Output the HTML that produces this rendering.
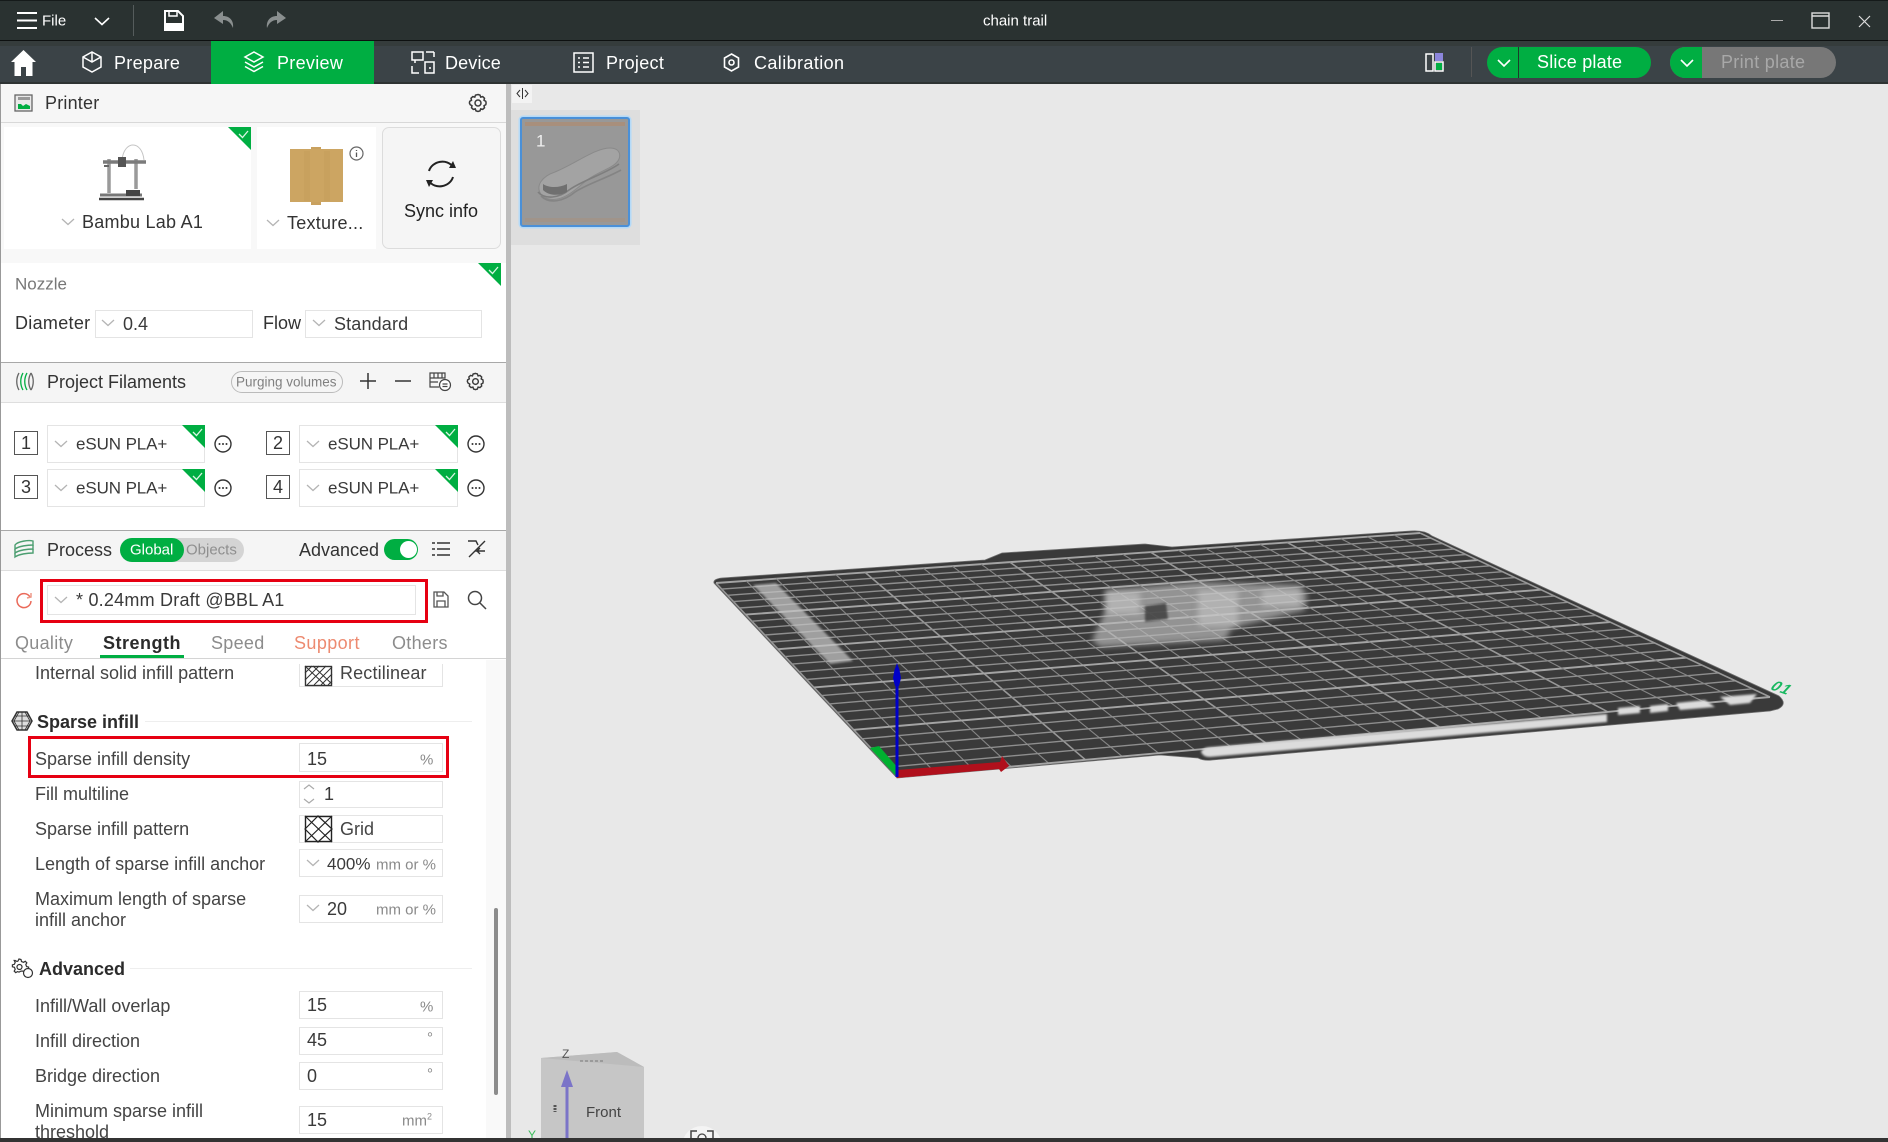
<!DOCTYPE html>
<html lang="en"><head><meta charset="utf-8"><title>chain trail</title>
<style>
html,body{margin:0;padding:0}
body{width:1888px;height:1142px;position:relative;overflow:hidden;background:#e8e8e8;font-family:"Liberation Sans","DejaVu Sans",sans-serif;font-size:18px;color:#3a3a3a}
.a{position:absolute}
.t{position:absolute;white-space:nowrap;line-height:1;transform:translateY(-50%)}
.w{color:#fff}
.b{font-weight:700;color:#2b2b2b}
.g{color:#8c8c8c;letter-spacing:.3px}
.s{font-size:15px;color:#8a8a8a}
.f{font-size:17px;letter-spacing:-.1px}
.box{position:absolute;background:#fff;border:1px solid #e4e4e4;box-sizing:border-box}
.num{position:absolute;width:24px;height:24px;border:1px solid #555;box-sizing:border-box;background:#fff;text-align:center;line-height:22px;font-size:18px;color:#333}
svg{position:absolute;overflow:visible}
</style></head><body>
<svg width="0" height="0" style="position:absolute"><defs>
<symbol id="chev" viewBox="0 0 14 8"><path d="M1 1l6 5.500L13 1" fill="none" stroke="#b4b4b4" stroke-width="1.300"/></symbol>
<symbol id="tri" viewBox="0 0 23 23"><path d="M0 0H23V23Z" fill="#00ae42"/><path d="M11 7l3.500 3.500L20 4" fill="none" stroke="#d9f5e3" stroke-width="1.300"/></symbol>
<symbol id="more" viewBox="0 0 18 18"><circle cx="9" cy="9" r="8" fill="#fff" stroke="#333" stroke-width="1.400"/><circle cx="5.500" cy="9" r="1" fill="#333"/><circle cx="9" cy="9" r="1" fill="#333"/><circle cx="12.500" cy="9" r="1" fill="#333"/></symbol>
<symbol id="gear" viewBox="0 0 20 20"><path d="M10 1.500l2 .6.700 2 2-.5 1.800 1.700-.5 2 1.800 1 .3 1.700-.3 1.700-1.800 1 .5 2-1.800 1.700-2-.5-.7 2-2 .6-2-.6-.7-2-2 .5-1.800-1.700.5-2-1.800-1L1.400 10l.3-1.700 1.800-1-.5-2 1.800-1.700 2 .5.700-2z" fill="none" stroke="#3a3a3a" stroke-width="1.500"/><circle cx="10" cy="10" r="3" fill="none" stroke="#3a3a3a" stroke-width="1.500"/></symbol>
</defs></svg>

<!-- title bar -->
<div class="a" style="left:0;top:0;width:1888px;height:41px;background:#2a3231;border-top:1px solid #151a1a;border-bottom:1px solid #0d1010;box-sizing:border-box"></div>
<div class="a" style="left:0;top:41px;width:1888px;height:5px;background:#353c3c"></div>
<svg style="left:16px;top:11px" width="22" height="20"><path d="M1 2H21M1 9.500H21M1 17H21" stroke="#fff" stroke-width="2"/></svg>
<span class="t w" style="left:42px;top:21px;font-size:15px">File</span>
<svg style="left:94px;top:17px" width="16" height="9"><path d="M1 1l7 6.500L15 1" fill="none" stroke="#fff" stroke-width="1.600"/></svg>
<div class="a" style="left:133px;top:5px;width:1px;height:31px;background:#555c5c"></div>
<svg style="left:164px;top:10px" width="20" height="21"><path d="M1 1H14L19 6V20H1Z" fill="none" stroke="#fff" stroke-width="2"/><path d="M5 1V6H13V1" fill="none" stroke="#fff" stroke-width="1.500"/><path d="M2 13H18V19H2Z" fill="#fff"/></svg>
<svg style="left:214px;top:11px" width="21" height="18"><path d="M9 0L0 7l9 6V9c5 0 8 3 10 8 1-7-3-12-10-12z" fill="#8a8f8f"/></svg>
<svg style="left:265px;top:11px" width="21" height="18"><path d="M12 0l9 7-9 6V9C7 9 4 12 2 17 1 10 5 5 12 5z" fill="#8a8f8f"/></svg>
<span class="t w" style="left:983px;top:21px;font-size:15px">chain trail</span>
<div class="a" style="left:1771px;top:20px;width:12px;height:1px;background:#aaa"></div>
<svg style="left:1811px;top:11px" width="19" height="18"><rect x="1" y="2" width="17" height="15" fill="none" stroke="#ddd" stroke-width="1.400"/><path d="M1 5H18" stroke="#ddd" stroke-width="1.400"/></svg>
<svg style="left:1858px;top:15px" width="13" height="13"><path d="M1 1L12 12M12 1L1 12" stroke="#ddd" stroke-width="1.200"/></svg>

<!-- tab bar -->
<div class="a" style="left:0;top:46px;width:1888px;height:38px;background:#3b4347;border-bottom:2px solid #2e3333;box-sizing:border-box"></div>
<div class="a" style="left:211px;top:41px;width:163px;height:43px;background:#00ae42"></div>
<svg style="left:11px;top:50px" width="25" height="26"><path d="M12.500 0L25 12h-3.500v14H15v-9h-5v9H3.500V12H0z" fill="#fff"/></svg>
<svg style="left:81px;top:50px" width="22" height="24" fill="none" stroke="#fff" stroke-width="1.500"><path d="M11 2l9 5v10l-9 5-9-5V7z"/><path d="M2 7l9 5 9-5M11 12V2"/></svg>
<span class="t w" style="left:114px;top:63px;letter-spacing:.3px">Prepare</span>
<svg style="left:243px;top:50px" width="22" height="24" fill="none" stroke="#fff" stroke-width="1.500"><path d="M11 2l9 5-9 5-9-5z"/><path d="M2 12l9 5 9-5M2 16.500l9 5 9-5"/></svg>
<span class="t w" style="left:277px;top:63px;letter-spacing:.3px">Preview</span>
<svg style="left:411px;top:51px" width="24" height="23" fill="none" stroke="#fff" stroke-width="1.500"><path d="M1 1H12V9H1zM4 12v-3M15 1h8M23 1v5M1 15v7h7M14 11h9v11H14zM18 17h2"/></svg>
<span class="t w" style="left:445px;top:63px;letter-spacing:.15px">Device</span>
<svg style="left:573px;top:52px" width="21" height="21" fill="none" stroke="#fff" stroke-width="1.500"><path d="M1 1H20V20H1zM5 6H7M5 10.500H7M5 15H7M10 6H16M10 10.500H16M10 15H16"/></svg>
<span class="t w" style="left:606px;top:63px;letter-spacing:.3px">Project</span>
<svg style="left:723px;top:53px" width="17" height="19" fill="none" stroke="#fff" stroke-width="1.600"><path d="M8.500 1l7 4v9l-7 4-7-4V5z"/><circle cx="8.500" cy="9.500" r="2.500"/></svg>
<span class="t w" style="left:754px;top:63px;letter-spacing:.4px">Calibration</span>
<svg style="left:1425px;top:52px" width="20" height="20"><rect x="1" y="2" width="7" height="17" fill="none" stroke="#fff" stroke-width="1.500"/><rect x="10" y="1" width="8" height="8" fill="#8c86dc"/><rect x="10" y="10" width="8" height="9" fill="none" stroke="#fff" stroke-width="1.500"/><rect x="11" y="11" width="6" height="7" fill="#00ae42"/></svg>
<div class="a" style="left:1471px;top:47px;width:1px;height:30px;background:#555"></div>
<div class="a" style="left:1487px;top:47px;width:164px;height:31px;border-radius:16px;background:#00ae42"></div>
<div class="a" style="left:1518px;top:47px;width:1px;height:31px;background:#1c3b2a"></div>
<svg style="left:1497px;top:59px" width="14" height="9"><path d="M1 1l6 6 6-6" fill="none" stroke="#fff" stroke-width="1.600"/></svg>
<span class="t w" style="left:1537px;top:62px;letter-spacing:.2px">Slice plate</span>
<div class="a" style="left:1670px;top:47px;width:166px;height:31px;border-radius:16px;background:#777;overflow:hidden"><div style="width:32px;height:31px;background:#00ae42"></div></div>
<svg style="left:1680px;top:59px" width="14" height="9"><path d="M1 1l6 6 6-6" fill="none" stroke="#fff" stroke-width="1.600"/></svg>
<span class="t" style="left:1721px;top:62px;color:#a8a8a8;letter-spacing:.3px">Print plate</span>

<!-- side panel -->
<div class="a" style="left:0;top:84px;width:506px;height:1056px;background:#fff;border-left:1px solid #999;box-sizing:border-box"></div>
<div class="a" style="left:506px;top:84px;width:5px;height:1056px;background:#bdbdbd"></div>
<!-- printer -->
<div class="a" style="left:1px;top:84px;width:505px;height:38px;background:#f6f6f6;border-bottom:1px solid #d8d8d8;box-sizing:content-box"></div>
<div class="a" style="left:1px;top:123px;width:505px;height:140px;background:#f8f8f8"></div>
<svg style="left:13px;top:94px" width="20" height="18"><rect x="2" y="1" width="17" height="16" fill="#e9e9e9" stroke="#666" stroke-width="1.300"/><path d="M5 3H17V6H5z" fill="#999"/><path d="M5 15V10h3l2 2 3-2 4 2v3z" fill="#00ae42"/></svg>
<span class="t" style="left:45px;top:103px;color:#333;letter-spacing:.2px">Printer</span>
<svg style="left:468px;top:93px" width="20" height="20"><use href="#gear"/></svg>
<div class="a" style="left:4px;top:127px;width:247px;height:122px;background:#fff"></div>
<svg style="left:228px;top:127px" width="23" height="23"><use href="#tri"/></svg>
<svg style="left:98px;top:143px" width="50" height="58" fill="none"><path d="M24 17C26 -3 44 -3 46 17" stroke="#c4c4c4" stroke-width="1"/><path d="M11 16V50M38 16V46" stroke="#9a9a9a" stroke-width="3.500"/><path d="M5 19H48" stroke="#7b7b7b" stroke-width="3.500"/><rect x="20" y="14" width="8" height="10" fill="#555"/><path d="M6 23H11" stroke="#666" stroke-width="2"/><path d="M2 52H44" stroke="#777" stroke-width="3"/><path d="M1 56H46" stroke="#444" stroke-width="2.500"/><rect x="28" y="47" width="14" height="6" fill="#444"/></svg>
<svg style="left:61px;top:218px" width="14" height="8"><use href="#chev"/></svg>
<span class="t" style="left:82px;top:222px;letter-spacing:.25px;color:#333">Bambu Lab A1</span>
<div class="a" style="left:257px;top:127px;width:119px;height:122px;background:#fff"></div>
<svg style="left:289px;top:146px" width="55" height="60"><path d="M1 3H22V1H32V3H54V56H32V59H22V56H1z" fill="#c9a15f"/><path d="M1 3H54V56H1z" fill="#d0ab6a" opacity=".35"/><path d="M18 5V55M38 5V55" stroke="#c29855" stroke-width="6" opacity=".3"/></svg>
<svg style="left:349px;top:146px" width="15" height="15"><circle cx="7.500" cy="7.500" r="6.500" fill="#fff" stroke="#666" stroke-width="1.200"/><path d="M7.500 4V5M7.500 6.500V11" stroke="#555" stroke-width="1.300"/></svg>
<svg style="left:266px;top:219px" width="14" height="8"><use href="#chev"/></svg>
<span class="t" style="left:287px;top:223px;letter-spacing:.25px;color:#333">Texture...</span>
<div class="a" style="left:382px;top:127px;width:119px;height:122px;background:#f5f5f5;border:1px solid #dcdcdc;border-radius:7px;box-sizing:border-box"></div>
<svg style="left:423px;top:158px" width="36" height="32" fill="none" stroke="#222" stroke-width="2"><path d="M6 13C9 3 24 0 30 9"/><path d="M30 19C27 29 12 32 6 23"/><path d="M26 10l7 0-3-7z" fill="#222" stroke="none"/><path d="M10 22l-7 0 3 7z" fill="#222" stroke="none"/></svg>
<span class="t" style="left:404px;top:211px;color:#222">Sync info</span>
<!-- nozzle -->
<div class="a" style="left:4px;top:263px;width:497px;height:92px;background:#fff"></div>
<svg style="left:478px;top:263px" width="23" height="23"><use href="#tri"/></svg>
<span class="t" style="left:15px;top:284px;font-size:17px;color:#777">Nozzle</span>
<span class="t" style="left:15px;top:323px;color:#333;letter-spacing:.3px">Diameter</span>
<div class="box" style="left:95px;top:310px;width:158px;height:28px"></div>
<svg style="left:101px;top:319px" width="14" height="8"><use href="#chev"/></svg>
<span class="t" style="left:123px;top:324px">0.4</span>
<span class="t" style="left:263px;top:323px;color:#333">Flow</span>
<div class="box" style="left:305px;top:310px;width:177px;height:28px"></div>
<svg style="left:312px;top:319px" width="14" height="8"><use href="#chev"/></svg>
<span class="t" style="left:334px;top:324px;letter-spacing:.15px">Standard</span>
<!-- filaments -->
<div class="a" style="left:1px;top:362px;width:505px;height:1px;background:#a8a8a8"></div>
<div class="a" style="left:1px;top:363px;width:505px;height:39px;background:#f5f5f5;border-bottom:1px solid #dedede"></div>
<svg style="left:15px;top:372px" width="20" height="19" fill="none" stroke-width="1.300"><path d="M4 1C1 6 1 13 4 18" stroke="#666"/><path d="M8 1C5 6 5 13 8 18" stroke="#00ae42"/><path d="M12 1C9 6 9 13 12 18" stroke="#00ae42"/><path d="M16 1C19 6 19 13 16 18M16 1C13 6 13 13 16 18" stroke="#666"/></svg>
<span class="t" style="left:47px;top:382px;color:#333">Project Filaments</span>
<div class="a" style="left:231px;top:371px;width:112px;height:22px;border:1px solid #bbb;border-radius:11px;box-sizing:border-box;background:#f5f5f5"></div>
<span class="t" style="left:236px;top:382px;font-size:13.500px;color:#808080">Purging volumes</span>
<svg style="left:360px;top:373px" width="16" height="16"><path d="M8 0V16M0 8H16" stroke="#333" stroke-width="1.500"/></svg>
<svg style="left:395px;top:373px" width="16" height="16"><path d="M0 8H16" stroke="#333" stroke-width="1.500"/></svg>
<svg style="left:428px;top:372px" width="23" height="19" fill="none" stroke="#444" stroke-width="1.200"><path d="M2 1H17V6H2zM2 6V15H11M6 1V6M10 1V6M14 1V6M2 10H10"/><circle cx="17" cy="13" r="5.500" fill="#fff"/><path d="M14.500 12H19.500M14.500 14.500H19.500"/></svg>
<svg style="left:466px;top:372px" width="19" height="19"><use href="#gear"/></svg>

<div class="num" style="left:14px;top:431px">1</div>
<div class="box" style="left:47px;top:425px;width:158px;height:38px"></div>
<svg style="left:54px;top:440px" width="14" height="8"><use href="#chev"/></svg>
<span class="t f" style="left:76px;top:444px">eSUN PLA+</span>
<svg style="left:182px;top:425px" width="23" height="23"><use href="#tri"/></svg>
<svg style="left:214px;top:435px" width="18" height="18"><use href="#more"/></svg>
<div class="num" style="left:266px;top:431px">2</div>
<div class="box" style="left:299px;top:425px;width:159px;height:38px"></div>
<svg style="left:306px;top:440px" width="14" height="8"><use href="#chev"/></svg>
<span class="t f" style="left:328px;top:444px">eSUN PLA+</span>
<svg style="left:435px;top:425px" width="23" height="23"><use href="#tri"/></svg>
<svg style="left:467px;top:435px" width="18" height="18"><use href="#more"/></svg>
<div class="num" style="left:14px;top:475px">3</div>
<div class="box" style="left:47px;top:469px;width:158px;height:38px"></div>
<svg style="left:54px;top:484px" width="14" height="8"><use href="#chev"/></svg>
<span class="t f" style="left:76px;top:488px">eSUN PLA+</span>
<svg style="left:182px;top:469px" width="23" height="23"><use href="#tri"/></svg>
<svg style="left:214px;top:479px" width="18" height="18"><use href="#more"/></svg>
<div class="num" style="left:266px;top:475px">4</div>
<div class="box" style="left:299px;top:469px;width:159px;height:38px"></div>
<svg style="left:306px;top:484px" width="14" height="8"><use href="#chev"/></svg>
<span class="t f" style="left:328px;top:488px">eSUN PLA+</span>
<svg style="left:435px;top:469px" width="23" height="23"><use href="#tri"/></svg>
<svg style="left:467px;top:479px" width="18" height="18"><use href="#more"/></svg>

<!-- process header -->
<div class="a" style="left:1px;top:530px;width:505px;height:1px;background:#a8a8a8"></div>
<div class="a" style="left:1px;top:531px;width:505px;height:39px;background:#f5f5f5;border-bottom:1px solid #dedede"></div>
<svg style="left:14px;top:539px" width="21" height="20" fill="none" stroke="#4b9e70" stroke-width="1.400"><path d="M1 6C4 2 15 1 19 2v4C14 6 5 7 1 10z"/><path d="M1 10v4c4-3 13-4 18-4V6"/><path d="M1 14v4c4-3 13-4 18-4v-4"/></svg>
<span class="t" style="left:47px;top:550px;color:#333">Process</span>
<div class="a" style="left:120px;top:538px;width:124px;height:24px;background:#d4d4d4;border-radius:12px"></div>
<div class="a" style="left:120px;top:538px;width:64px;height:24px;background:#00ae42;border-radius:12px"></div>
<span class="t w" style="left:130px;top:550px;font-size:15px">Global</span>
<span class="t" style="left:186px;top:550px;font-size:15px;color:#8f8f8f">Objects</span>
<span class="t" style="left:299px;top:550px;color:#333">Advanced</span>
<div class="a" style="left:384px;top:539px;width:34px;height:21px;background:#00ae42;border-radius:11px"></div>
<div class="a" style="left:400px;top:541px;width:17px;height:17px;background:#fff;border-radius:50%"></div>
<svg style="left:432px;top:541px" width="18" height="16"><path d="M5 2H18M5 8H18M5 14H18" stroke="#333" stroke-width="1.500"/><path d="M0 2H3M0 8H3M0 14H3" stroke="#333" stroke-width="1.500"/></svg>
<svg style="left:467px;top:540px" width="19" height="18" fill="none" stroke="#333" stroke-width="1.400"><path d="M1 1H9l2 4M18 1L2 17M18 11H10l3-3M10 11l3 3"/></svg>
<!-- preset -->
<svg style="left:15px;top:591px" width="18" height="18" fill="none" stroke="#ea6a5a" stroke-width="1.500"><path d="M15 6A7 7 0 1 0 16 10"/><path d="M12 7l4-1 0-4" stroke="#e98"/></svg>
<div class="box" style="left:47px;top:585px;width:369px;height:30px"></div>
<div class="a" style="left:40px;top:579px;width:388px;height:44px;border:3.500px solid #e60012;box-sizing:border-box"></div>
<svg style="left:54px;top:596px" width="14" height="8"><use href="#chev"/></svg>
<span class="t" style="left:76px;top:600px;letter-spacing:.22px">* 0.24mm Draft @BBL A1</span>
<svg style="left:433px;top:591px" width="16" height="17" fill="none" stroke="#555" stroke-width="1.300"><path d="M1 1H11L15 5V16H1z"/><path d="M4 1V5H10V1M4 16V10H12V16"/></svg>
<svg style="left:467px;top:590px" width="20" height="20" fill="none" stroke="#444" stroke-width="1.500"><circle cx="8" cy="8" r="6.500"/><path d="M13 13L19 19"/></svg>
<!-- tabs -->
<span class="t g" style="left:15px;top:643px">Quality</span>
<span class="t b" style="left:103px;top:643px;letter-spacing:.5px">Strength</span>
<span class="t g" style="left:211px;top:643px">Speed</span>
<span class="t" style="left:294px;top:643px;color:#ed8a70;letter-spacing:.4px">Support</span>
<span class="t g" style="left:392px;top:643px">Others</span>
<div class="a" style="left:100px;top:655px;width:84px;height:3px;background:#00ae42"></div>
<div class="a" style="left:1px;top:658px;width:505px;height:1px;background:#d4d4d4"></div>
<div class="a" style="left:486px;top:660px;width:20px;height:478px;background:#f9f9f9"></div>
<div class="a" style="left:494px;top:908px;width:4px;height:187px;background:#8c8c8c;border-radius:2px"></div>

<span class="t" style="left:35px;top:673px;color:#444">Internal solid infill pattern</span>
<div class="box" style="left:299px;top:650px;width:144px;height:37px;clip-path:inset(14px 0 0 0)"></div>
<svg style="left:305px;top:666px" width="27" height="20" fill="none" stroke="#333"><rect x=".5" y=".5" width="26" height="19" stroke-width="1.400"/><path d="M0 7L7 0M0 14L14 0M2 19L21 0M9 19L27 1M16 19L27 8M23 19L27 15M0 0L20 19M8 0L27 18" stroke-width="1"/></svg>
<span class="t" style="left:340px;top:673px;color:#444;letter-spacing:.15px">Rectilinear</span>

<svg style="left:11px;top:711px" width="22" height="20" fill="none" stroke="#333" stroke-width="1.100"><path d="M6 1H16L21 10L16 19H6L1 10Z" fill="#ddd" stroke-width="1.500"/><path d="M1 10H21M4 5H18M4 15H18M8 1L3 10L8 19M14 1L19 10L14 19M11 1V19" stroke-width=".8"/></svg>
<span class="t b" style="left:37px;top:722px">Sparse infill</span>
<div class="a" style="left:145px;top:721px;width:327px;height:1px;background:#eee"></div>

<div class="box" style="left:299px;top:743px;width:144px;height:29px"></div>
<span class="t" style="left:35px;top:759px;color:#444">Sparse infill density</span>
<span class="t" style="left:307px;top:759px">15</span>
<span class="t s" style="left:420px;top:760px">%</span>
<div class="a" style="left:28px;top:736px;width:421px;height:42px;border:3.500px solid #e60012;box-sizing:border-box"></div>

<span class="t" style="left:35px;top:794px;color:#444">Fill multiline</span>
<div class="box" style="left:299px;top:781px;width:144px;height:27px"></div>
<svg style="left:303px;top:783px" width="12" height="22" fill="none" stroke="#aaa" stroke-width="1.200"><path d="M1 6l5-4 5 4M1 16l5 4 5-4"/></svg>
<span class="t" style="left:324px;top:794px">1</span>

<span class="t" style="left:35px;top:829px;color:#444">Sparse infill pattern</span>
<div class="box" style="left:299px;top:815px;width:144px;height:28px"></div>
<svg style="left:305px;top:816px" width="27" height="26" fill="none" stroke="#222"><rect x=".5" y=".5" width="26" height="25" stroke-width="1.400"/><path d="M0 13L13 0L27 13L13 26ZM0 0L27 26M27 0L0 26" stroke-width="1.200"/></svg>
<span class="t" style="left:340px;top:829px;color:#444">Grid</span>

<span class="t" style="left:35px;top:864px;color:#444">Length of sparse infill anchor</span>
<div class="box" style="left:299px;top:849px;width:144px;height:28px"></div>
<svg style="left:306px;top:859px" width="14" height="8"><use href="#chev"/></svg>
<span class="t" style="left:327px;top:864px;font-size:17px">400%</span>
<span class="t s" style="left:376px;top:865px">mm or %</span>

<span class="t" style="left:35px;top:899px;color:#444">Maximum length of sparse</span>
<span class="t" style="left:35px;top:920px;color:#444">infill anchor</span>
<div class="box" style="left:299px;top:895px;width:144px;height:28px"></div>
<svg style="left:306px;top:904px" width="14" height="8"><use href="#chev"/></svg>
<span class="t" style="left:327px;top:909px">20</span>
<span class="t s" style="left:376px;top:910px">mm or %</span>

<svg style="left:11px;top:958px" width="23" height="21" fill="none" stroke="#333" stroke-width="1.200"><path d="M8 1l2 .5.5 2 2 .8 1.800-1 1.500 1.500-1 1.800.8 2 2 .5v2l-2 .5-.8 1.500H10l-2 1-1.500-.5-1.800 1-1.500-1.500 1-1.800-.8-2-2-.5v-2l2-.5.8-2-1-1.800L4.200 2.500l1.800 1 1-.5z"/><circle cx="8.500" cy="9" r="2.500"/><circle cx="17" cy="15" r="4.500" fill="#fff"/></svg>
<span class="t b" style="left:39px;top:969px">Advanced</span>
<div class="a" style="left:130px;top:968px;width:342px;height:1px;background:#eee"></div>

<span class="t" style="left:35px;top:1006px;color:#444">Infill/Wall overlap</span>
<div class="box" style="left:299px;top:991px;width:144px;height:28px"></div>
<span class="t" style="left:307px;top:1005px">15</span>
<span class="t s" style="left:420px;top:1007px">%</span>

<span class="t" style="left:35px;top:1041px;color:#444">Infill direction</span>
<div class="box" style="left:299px;top:1027px;width:144px;height:28px"></div>
<span class="t" style="left:307px;top:1040px">45</span>
<span class="t s" style="left:427px;top:1038px">°</span>

<span class="t" style="left:35px;top:1076px;color:#444">Bridge direction</span>
<div class="box" style="left:299px;top:1062px;width:144px;height:28px"></div>
<span class="t" style="left:307px;top:1076px">0</span>
<span class="t s" style="left:427px;top:1074px">°</span>

<span class="t" style="left:35px;top:1111px;color:#444">Minimum sparse infill</span>
<span class="t" style="left:35px;top:1132px;color:#444">threshold</span>
<div class="box" style="left:299px;top:1106px;width:144px;height:28px"></div>
<span class="t" style="left:307px;top:1120px">15</span>
<span class="t s" style="left:402px;top:1121px">mm<sup style="font-size:9px;line-height:0">2</sup></span>

<!-- viewport -->
<div class="a" style="left:511px;top:84px;width:1377px;height:1054px;background:#e8e8e8"></div>
<div class="a" style="left:512px;top:85px;width:20px;height:18px;background:#f3f3f3"></div>
<svg style="left:516px;top:88px" width="13" height="11" fill="none" stroke="#333" stroke-width="1"><path d="M4 2L1 5.500L4 9M9 2L12 5.500L9 9M6.500 0V11"/></svg>
<div class="a" style="left:511px;top:110px;width:129px;height:135px;background:#dedede"></div>
<div class="a" style="left:520px;top:117px;width:110px;height:110px;background:#989898;border:2.500px solid #4a90d8;box-shadow:0 0 0 1.500px #b4daf8;border-radius:3px;box-sizing:border-box"></div>
<div class="a" style="left:525px;top:122px;width:100px;height:4px;background:#a88f7c"></div>
<div class="a" style="left:525px;top:218px;width:100px;height:4px;background:#a88f7c;opacity:.5"></div>
<span class="t w" style="left:536px;top:141px;font-size:17px;opacity:.85">1</span>
<svg style="left:535px;top:142px" width="90" height="70"><path d="M8 55C-2 44 8 34 20 30C40 22 60 6 75 6C84 6 86 12 84 17C80 26 66 28 52 38C42 46 26 64 8 55Z" fill="#a3a3a3" stroke="#8a8a8a"/><path d="M3 50C10 58 24 56 34 48C48 38 70 32 84 22" fill="none" stroke="#7e7e7e" stroke-width="1.600"/><path d="M6 54C14 62 28 60 40 50C52 42 72 36 86 28" fill="none" stroke="#848484" stroke-width="1.600"/><path d="M8 42C14 46 24 46 32 42L32 50C24 54 14 54 8 48Z" fill="#707070"/></svg>

<!-- plate -->
<svg id="plate" style="left:0;top:0" width="1888" height="1142">
<defs><filter id="bl" x="-20%" y="-20%" width="140%" height="140%"><feGaussianBlur stdDeviation="3"/></filter><filter id="bl1"><feGaussianBlur stdDeviation="1"/></filter></defs>
<path d="M714 583Q713 579 722 578L985 560L1002 553L1145 544L1172 547L1411 531Q1425 530 1432 536L1779 696Q1788 704 1778 709L1770 711L1212 760Q1204 761 1198 758L1160 755L897 778Z" fill="#3a3a3a" stroke="#6e6e6e" stroke-width=".8"/>
<g id="grid"></g>
<path d="M753 585L776 583L853 661L830 664Z" fill="#c6c6c6" opacity=".72" filter="url(#bl1)"/>
<path d="M1201 752Q1203 747 1212 747L1607 714L1607 722L1210 757Q1203 757 1201 752Z" fill="#dcdcdc" filter="url(#bl1)"/>
<path d="M1618 708L1640 706L1640 713L1618 715ZM1650 706L1668 704L1668 711L1650 713ZM1676 703L1705 700L1715 707L1680 710ZM1720 697L1757 694L1750 703L1730 705Z" fill="#dcdcdc" filter="url(#bl1)"/>
<g filter="url(#bl)" fill="#bdbdbd" opacity=".68"><path d="M1105 590L1200 582L1300 585L1307 595L1305 610L1232 628L1225 640L1100 647L1092 640L1105 612Z"/></g>
<g filter="url(#bl)" fill="#cfcfcf" opacity=".5"><path d="M1106 592H1140V614H1106ZM1198 590H1238V626H1198ZM1262 590H1300V606H1262Z"/></g>
<path d="M1145 606L1166 603L1168 619L1145 622Z" fill="#3a3a3a" filter="url(#bl1)" opacity=".8"/>
<path d="M897 777L870 748L879 746L898 768Z" fill="#00b030"/>
<path d="M897 770L1000 762L1002 756L1009 766L1001 772L999 769L897 778Z" fill="#b0101c"/>
<path d="M895.500 777V684H898.500V777Z" fill="#0000c8"/>
<path d="M897 663L899.500 670L901 678L899 686H895L893 678L894.500 670Z" fill="#0000c8"/>
<text x="0" y="0" transform="translate(1769 689) rotate(18) skewX(-25)" font-family="Liberation Sans" font-weight="700" font-size="15" fill="#18b860" letter-spacing="1.500">01</text>

<!-- cube gizmo -->
<path d="M541 1058L617 1052L644 1067V1140H541Z" fill="#c6c6c6"/>
<path d="M617 1052L644 1067L541 1058Z" fill="#bcbcbc"/>
<path d="M580 1061H604" stroke="#777" stroke-width="1" stroke-dasharray="3 2"/>
<path d="M555 1105V1112" stroke="#555" stroke-width="3" stroke-dasharray="2 1"/>
<path d="M567 1085V1140" stroke="#7b74c8" stroke-width="3"/>
<path d="M567 1070L573 1087H561Z" fill="#7b74c8"/>
<text x="562" y="1058" font-family="Liberation Sans" font-size="12" fill="#555">Z</text>
<text x="528" y="1139" font-family="Liberation Sans" font-size="12" fill="#3cbc5c">Y</text>
<text x="586" y="1117" font-family="Liberation Sans" font-size="15" fill="#444">Front</text>
<circle cx="702" cy="1146" r="20" fill="#f4f4f4"/>
<path d="M691 1138V1131H697M707 1131H713V1138" fill="none" stroke="#444" stroke-width="1.500"/>
<circle cx="702" cy="1138" r="4" fill="none" stroke="#444" stroke-width="1.300"/>
</svg>
<script>
(function(){
var q=[[716,583],[1420,533],[1770,697],[898,777]];
var x0=q[0][0],y0=q[0][1],x1=q[1][0],y1=q[1][1],x2=q[2][0],y2=q[2][1],x3=q[3][0],y3=q[3][1];
var dx1=x1-x2,dx2=x3-x2,dy1=y1-y2,dy2=y3-y2,sx=x0-x1+x2-x3,sy=y0-y1+y2-y3;
var den=dx1*dy2-dx2*dy1,g=(sx*dy2-dx2*sy)/den,h=(dx1*sy-sx*dy1)/den;
var a=x1-x0+g*x1,b=x3-x0+h*x3,c=x0,d=y1-y0+g*y1,e=y3-y0+h*y3,f=y0;
function P(u,v){var w=g*u+h*v+1;return ((a*u+b*v+c)/w).toFixed(1)+" "+((d*u+e*v+f)/w).toFixed(1)}
var s="",n=25,i,bold;
for(i=0;i<=n;i++){bold=i%5==0;
s+='<path d="M'+P(i/n,0)+'L'+P(i/n,1)+'" stroke="'+(bold?'#989898':'#868686')+'" stroke-width="'+(bold?1.6:1.1)+'"/>';
s+='<path d="M'+P(0,i/n)+'L'+P(1,i/n)+'" stroke="'+(bold?'#a4a4a4':'#8e8e8e')+'" stroke-width="'+(bold?1.9:1.4)+'"/>';}
document.getElementById("grid").innerHTML=s;
})();
</script>

<div class="a" style="left:0;top:1138px;width:1888px;height:4px;background:#333"></div>
</body></html>
